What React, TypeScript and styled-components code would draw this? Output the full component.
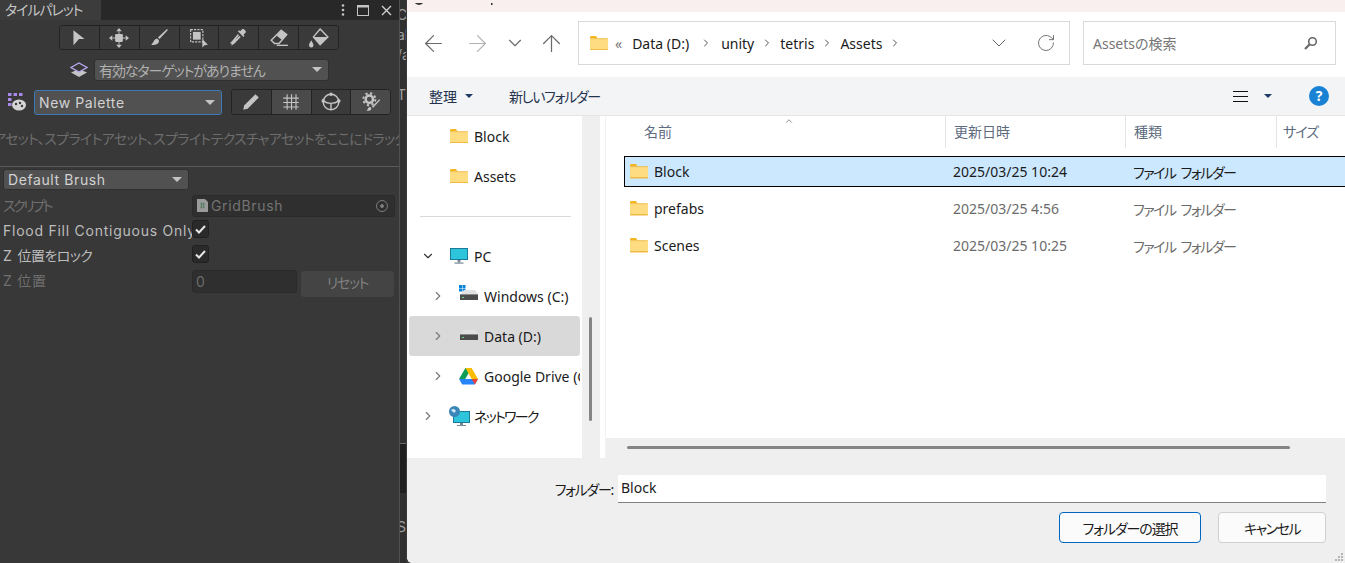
import { ReactNode } from 'react';
import styled, { createGlobalStyle } from 'styled-components';
import { ArrowLeft, ArrowRight, ArrowUp, ChevronDown, ChevronRight, ChevronUp, RotateCw } from 'lucide-react';

const GlobalStyle = createGlobalStyle`
  html, body { margin: 0; padding: 0; height: 100%; overflow: hidden; background: #383838; }
  #root { height: 100%; }
  * { box-sizing: border-box; font-feature-settings: 'palt'; }
  svg { flex: none; }
`;

const JP = '"Noto Sans CJK JP"';
const UNITY_FONT = `Inter, ${JP}, sans-serif`;
const WIN_FONT = `"Noto Sans", ${JP}, sans-serif`;

const Page = styled.div`
  display: flex;
  width: 1345px;
  height: 563px;
  overflow: hidden;
`;

const Spaced = styled.span<{ $ml?: number; $mr?: number }>`
  display: inline-flex;
  align-items: center;
  margin-left: ${p => p.$ml ?? 0}px;
  margin-right: ${p => p.$mr ?? 0}px;
`;

/* the source font sets kana tighter than Noto does */
const Kana = styled.span<{ $ls?: number; $ml?: number }>`
  letter-spacing: ${p => p.$ls ?? -1.3}px;
  word-spacing: 3px;
  margin-left: ${p => p.$ml ?? 0}px;
`;

/* ---------- Unity tile palette ---------- */

const UnityPanel = styled.div`
  width: 400px;
  flex: none;
  height: 100%;
  background: #383838;
  color: #c4c4c4;
  font: 14px ${UNITY_FONT};
  letter-spacing: 0.45px;
  border-right: 1px solid #505050;
`;

const TabBar = styled.div`
  display: flex;
  align-items: center;
  height: 20px;
  background: #282828;
  color: #c4c4c4;
`;

const Tab = styled.div`
  width: 101px;
  height: 20px;
  background: #3c3c3c;
  padding-left: 5px;
  font-size: 14px;
  line-height: 19px;
  white-space: nowrap;
`;

const WindowButtons = styled.div`
  margin-left: auto;
  display: flex;
  align-items: center;
  gap: 12px;
  padding-right: 7px;
  height: 16px;
`;

const ToolRow = styled.div<{ $mt: number; $pl: number }>`
  display: flex;
  align-items: center;
  margin-top: ${p => p.$mt}px;
  padding-left: ${p => p.$pl}px;
`;

const ButtonGroup = styled.div<{ $w: number; $ml?: number }>`
  display: flex;
  width: ${p => p.$w}px;
  margin-left: ${p => p.$ml ?? 0}px;
  border: 1px solid #232323;
  border-radius: 3px;
  overflow: hidden;
`;

const ToolButton = styled.div<{ $on?: boolean; $h: number }>`
  flex: 1;
  height: ${p => p.$h}px;
  display: flex;
  align-items: center;
  justify-content: center;
  background: ${p => (p.$on ? '#4a4a4a' : '#3a3a3a')};
  & + & { border-left: 1px solid #232323; }
`;

const Dropdown = styled.div<{ $w: number; $h: number; $focus?: boolean; $dim?: boolean }>`
  width: ${p => p.$w}px;
  height: ${p => p.$h}px;
  display: flex;
  align-items: center;
  justify-content: space-between;
  padding: 0 6px ${p => (p.$focus ? 0 : 1)}px 4px;
  background: #515151;
  border: 1px solid ${p => (p.$focus ? '#3a79bb' : '#303030')};
  border-radius: 3px;
  color: ${p => (p.$dim ? '#b0b0b0' : '#d2d2d2')};
  font-size: 14px;
  letter-spacing: 0.6px;
  white-space: nowrap;
`;

const Caret = styled.span`
  width: 0;
  height: 0;
  border-left: 5px solid transparent;
  border-right: 5px solid transparent;
  border-top: 5px solid #c4c4c4;
`;

const Hint = styled.div`
  display: flex;
  justify-content: center;
  margin-top: 13px;
  height: 21px;
  line-height: 21px;
  overflow: hidden;
  white-space: nowrap;
  color: #6d6d6d;
  font-size: 14px;
  letter-spacing: -0.65px;
`;

const Divider = styled.div`
  height: 1px;
  background: #5a5a5a;
  margin-top: 17px;
`;

const Inspector = styled.div`
  display: grid;
  grid-template-columns: 189px 1fr;
  row-gap: 3px;
  padding: 5px 4px 0 3px;
`;

const FieldLabel = styled.div<{ $dim?: boolean }>`
  overflow: hidden;
  white-space: nowrap;
  font-size: 14px;
  line-height: 21px;
  letter-spacing: 0.75px;
  color: ${p => (p.$dim ? '#6f6f6f' : '#bdbdbd')};
  height: 22px;
`;

const FieldWrap = styled.div`
  display: flex;
  gap: 4px;
  align-items: flex-start;
  height: 22px;
`;

const ScriptField = styled.div`
  flex: 1;
  height: 22px;
  display: flex;
  align-items: center;
  gap: 3px;
  padding: 0 0 1px 4px;
  background: #2f2f2f;
  border: 1px solid #2a2a2a;
  border-radius: 3px;
  color: #737373;
  font-size: 14px;
  letter-spacing: 0.65px;
`;

const Check = styled.div`
  width: 17px;
  height: 18px;
  display: flex;
  align-items: center;
  justify-content: center;
  background: #2a2a2a;
  border: 1px solid #212121;
  border-radius: 3px;
`;

const NumberField = styled.div`
  width: 105px;
  height: 23px;
  padding-left: 3px;
  background: #2f2f2f;
  border: 1px solid #2a2a2a;
  border-radius: 3px;
  color: #6b6b6b;
  line-height: 21px;
`;

const ResetButton = styled.div`
  width: 93px;
  height: 26px;
  margin-top: 1px;
  border-radius: 3px;
  background: #444;
  color: #808080;
  text-align: center;
  line-height: 23px;
  font-size: 14px;
`;

/* ---------- window behind the dialog ---------- */

const BackStrip = styled.div`
  width: 6px;
  flex: none;
  display: flex;
  flex-direction: column;
  background: #303030;
  color: #a0a0a0;
  font: 14px/20px ${UNITY_FONT};
  overflow: hidden;
  white-space: nowrap;
  padding-top: 5px;
`;

const BackLine = styled.div<{ $mt?: number }>`
  height: 20px;
  flex: none;
  margin-top: ${p => p.$mt ?? 0}px;
  text-indent: -3px;
`;

const BackBlock = styled.div`
  height: 50px;
  flex: none;
  margin-top: 338px;
  background: #202020;
  border-top: 1px solid #6a6a6a;
`;

/* ---------- Windows dialog ---------- */

const Dialog = styled.div`
  flex: 1;
  height: 100%;
  display: flex;
  flex-direction: column;
  background: #fff;
  border-left: 1px solid #3a3a3a;
  border-bottom-left-radius: 6px;
  color: #1a1a1a;
  font: 14px ${WIN_FONT};
  overflow: hidden;
`;

const TitleBar = styled.div`
  height: 12px;
  flex: none;
  background: #f9efef;
`;

const NavBar = styled.div`
  height: 65px;
  flex: none;
  display: flex;
  align-items: center;
  padding: 0 9px 3px 4px;
  background: #fff;
`;

const NavSlot = styled.div<{ $w: number }>`
  width: ${p => p.$w}px;
  flex: none;
  display: flex;
  justify-content: center;
`;

const NavBox = styled.div<{ $w: number; $ml?: number }>`
  width: ${p => p.$w}px;
  margin-left: ${p => p.$ml ?? 7}px;
  flex: none;
  height: 44px;
  display: flex;
  align-items: center;
  border: 1px solid #d9d9d9;
`;

const Crumbs = styled.div`
  flex: 1;
  display: flex;
  align-items: center;
  padding-left: 11px;
  gap: 7px;
`;

const Crumb = styled.span<{ $ml?: number; $mr?: number; $dim?: boolean }>`
  font-size: 14px;
  color: ${p => (p.$dim ? '#777' : '#1a1a1a')};
  margin-left: ${p => p.$ml ?? 0}px;
  margin-right: ${p => p.$mr ?? 0}px;
`;

const SearchText = styled.span`
  flex: 1;
  padding-left: 9px;
  color: #767676;
`;

const CmdBar = styled.div`
  height: 39px;
  flex: none;
  display: flex;
  align-items: center;
  padding: 0 16px 0 22px;
  background: #f3f4f6;
  border-bottom: 1px solid #e4e4e4;
  color: #24334d;
`;

const CmdItem = styled.span<{ $ml?: number; $gap?: number; $right?: boolean }>`
  display: flex;
  align-items: center;
  gap: ${p => p.$gap ?? 8}px;
  margin-left: ${p => (p.$right ? 'auto' : `${p.$ml ?? 0}px`)};
`;

const DownCaret = styled.span`
  width: 0;
  height: 0;
  border-left: 4px solid transparent;
  border-right: 4px solid transparent;
  border-top: 4px solid #1f3a66;
`;

const HelpBadge = styled.span`
  width: 20px;
  height: 20px;
  margin-left: 37px;
  border-radius: 50%;
  background: #1a82d4;
  color: #fff;
  font-size: 14px;
  font-weight: 700;
  line-height: 20px;
  text-align: center;
`;

const Body = styled.div`
  flex: 1;
  display: flex;
  min-height: 0;
`;

const Sidebar = styled.div`
  width: 175px;
  flex: none;
  padding: 0 2px;
  background: #fff;
`;

const SideRow = styled.div<{ $indent: number; $selected?: boolean }>`
  height: 40px;
  display: flex;
  align-items: center;
  padding-left: ${p => p.$indent}px;
  gap: 6px;
  border-radius: 3px;
  white-space: nowrap;
  overflow: hidden;
  background: ${p => (p.$selected ? '#d9d9d9' : 'transparent')};
`;

const TreeArrow = styled.span<{ $mr: number }>`
  width: 14px;
  flex: none;
  display: flex;
  justify-content: center;
  margin-right: ${p => p.$mr}px;
  color: #7a7a7a;
`;

const SideRule = styled.div`
  height: 1px;
  background: #d9d9d9;
  margin: 20px 9px 19px 11px;
`;

const VScrollTrack = styled.div`
  width: 18px;
  flex: none;
  background: #efefef;
  padding: 201px 0 0 7px;
`;

const VScrollThumb = styled.div`
  width: 3px;
  height: 104px;
  background: #858585;
  border-radius: 2px;
`;

const ListPane = styled.div`
  flex: 1;
  min-width: 0;
  display: flex;
  flex-direction: column;
  margin-left: 5px;
  border-left: 1px solid #f2f2f2;
`;

const ListHeader = styled.div`
  position: relative;
  height: 32px;
  flex: none;
  display: grid;
  grid-template-columns: 339px 180px 151px 1fr;
  color: #5d6b80;
`;

const SortMark = styled.span`
  position: absolute;
  left: 178px;
  top: -5px;
  color: #777;
`;

const HeaderCell = styled.div<{ $pl?: number; $first?: boolean }>`
  display: flex;
  align-items: center;
  padding: 0 0 2px ${p => p.$pl ?? 8}px;
  height: 32px;
  border-left: ${p => (p.$first ? 'none' : '1px solid #e5e5e5')};
  white-space: nowrap;
`;

const Rows = styled.div`
  flex: 1;
  display: flex;
  flex-direction: column;
  gap: 6px;
  padding: 8px 0 0 18px;
`;

const FileRow = styled.div<{ $selected?: boolean }>`
  height: 31px;
  display: grid;
  grid-template-columns: 320px 180px 1fr;
  align-items: center;
  margin-right: ${p => (p.$selected ? -2 : 0)}px;
  border: 1px solid ${p => (p.$selected ? '#000' : 'transparent')};
  background: ${p => (p.$selected ? '#cce8ff' : 'transparent')};
  color: ${p => (p.$selected ? '#1a1a1a' : '#6b6b6b')};
`;

const NameCell = styled.div`
  display: flex;
  align-items: center;
  gap: 6px;
  padding-left: 5px;
  color: #1a1a1a;
`;

const DateCell = styled.div`
  padding-left: 8px;
`;

const HScrollTrack = styled.div`
  height: 20px;
  flex: none;
  background: #efefef;
  padding: 8px 55px 0 21px;
`;

const HScrollThumb = styled.div`
  height: 3px;
  background: #858585;
  border-radius: 2px;
`;

const Footer = styled.div`
  position: relative;
  height: 105px;
  flex: none;
  background: #efefef;
  padding: 17px 19px 0 0;
`;

const FolderField = styled.div`
  display: flex;
  justify-content: flex-end;
  align-items: center;
  gap: 5px;
`;

const FolderInput = styled.div`
  width: 708px;
  height: 28px;
  padding-left: 3px;
  background: #fff;
  border-bottom: 1px solid #808080;
  line-height: 25px;
`;

const FooterButtons = styled.div`
  display: flex;
  justify-content: flex-end;
  gap: 17px;
  margin-top: 9px;
`;

const DialogButton = styled.div<{ $w: number; $primary?: boolean }>`
  width: ${p => p.$w}px;
  height: 31px;
  display: flex;
  align-items: center;
  justify-content: center;
  background: #fbfbfb;
  border: 1px solid ${p => (p.$primary ? '#0067c0' : '#d0d0d0')};
  border-radius: 4px;
  font-size: 14px;
`;

const Grip = styled.svg`
  position: absolute;
  right: 1px;
  bottom: 1px;
`;

/* ---------- drawings ---------- */

function Folder({ w = 18 }: { w?: number }) {
  return (
    <svg width={w} height={w * 0.8} viewBox="0 0 20 16">
      <path d="M0 1.5C0 .7.7 0 1.5 0h5l2 2.5H0z" fill="#f5b51f" />
      <rect x="0" y="2.5" width="20" height="13.5" rx="1" fill="#f0b93f" />
      <rect x="0" y="3.5" width="20" height="11" fill="#fddc82" />
    </svg>
  );
}

function Drive({ win }: { win?: boolean }) {
  return (
    <svg width="19" height="22" viewBox="0 0 19 22">
      {win && (
        <g fill="#0a84d8">
          <rect x="0" y="0" width="3" height="3" />
          <rect x="3.500" y="0" width="3" height="3" />
          <rect x="0" y="3.500" width="3" height="3" />
          <rect x="3.500" y="3.500" width="3" height="3" />
        </g>
      )}
      <path d="M2 9l3-4h11l3 4z" fill="#e2e2e2" />
      <rect x="1" y="9" width="18" height="6" fill="#4c4c4c" />
      <rect x="1" y="9" width="18" height="1" fill="#8a8a8a" />
      <rect x="3" y="12" width="2" height="1" fill="#5fe08a" />
    </svg>
  );
}

function Monitor() {
  return (
    <svg width="18" height="16" viewBox="0 0 18 16">
      <rect x=".5" y=".5" width="17" height="11" fill="#2ec5dc" stroke="#1b7a96" />
      <rect x="7.500" y="12" width="3" height="2.500" fill="#7a8a96" />
      <rect x="4.500" y="14.500" width="9" height="1.200" fill="#7a8a96" />
    </svg>
  );
}

function Network() {
  return (
    <svg width="21" height="20" viewBox="0 0 21 20">
      <rect x="4.500" y="5.500" width="16" height="11" fill="#2ec5dc" stroke="#1b7a96" />
      <rect x="11" y="17" width="3" height="2" fill="#7a8a96" />
      <rect x="8" y="19" width="9" height="1" fill="#7a8a96" />
      <circle cx="5.500" cy="5.500" r="5.500" fill="#3a86b8" />
      <path d="M2 4c2-2 4-1 5 1l-2 2z" fill="#cfe6f5" />
    </svg>
  );
}

function GoogleDrive() {
  return (
    <svg width="19" height="17" viewBox="0 0 20 18">
      <path d="M6.700 0h6.600L6.600 11.600H0z" fill="#0f9d58" />
      <path d="M13.300 0L20 11.600h-6.600L6.700 0z" fill="#fbbc04" />
      <path d="M0 11.600h20L16.700 17.500H3.300z" fill="#2684fc" />
      <path d="M20 11.600h-6.600l3.300 5.900z" fill="#ea4335" />
    </svg>
  );
}

function Tool({ children }: { children: ReactNode }) {
  return (
    <svg width="20" height="20" viewBox="0 0 18 18" fill="#c4c4c4">
      {children}
    </svg>
  );
}

function Tick() {
  return (
    <svg width="11" height="9" viewBox="0 0 11 9" fill="none" stroke="#e6e6e6" strokeWidth="2">
      <path d="M1 4.500l3 3 6-6.500" />
    </svg>
  );
}

const tools: ReactNode[] = [
  <path key="select" d="M4 2l10 8H9L4 15.500z" />,
  <g key="move">
    <rect x="5.500" y="5.500" width="7" height="7" rx="1" />
    <path d="M9 0l2.500 3h-5zM9 18l2.500-3h-5zM0 9l3-2.500v5zM18 9l-3-2.500v5z" />
    <path d="M8.600 3h.8v3h-.8zM8.600 12h.8v3h-.8zM3 8.600h3v.8H3zM12 8.600h3v.8h-3z" />
  </g>,
  <g key="brush">
    <path d="M16.200 1l.8.8-7.500 8.200-1.500-1.500z" />
    <path d="M6 10c2-1 3 1 3 2 0 2-3 4-7 3 2-1 2-4 4-5z" />
  </g>,
  <g key="box">
    <rect x="1.500" y="1.500" width="11" height="11" fill="none" stroke="#c4c4c4" strokeDasharray="2 1" />
    <rect x="3.500" y="3.500" width="7" height="7" />
    <path d="M12 10l5 5-3 .5-2 2z" />
  </g>,
  <g key="pick">
    <path d="M12 1c1-1 4 2 3 3l-2 2 1 1-1 1-5-5 1-1 1 1z" />
    <path d="M8 5.500l1 1-5 6-2 2-1-1 2-2zM9.500 7l1 1-5.500 6-3 2 1-3z" />
  </g>,
  <g key="erase">
    <path d="M11 2l5 4-7 8H5L2 11z" fill="none" stroke="#c4c4c4" strokeWidth="1.300" />
    <path d="M11 2l5 4-4 5-5-4z" />
    <rect x="7" y="15" width="10" height="1.200" />
  </g>,
  <g key="fill">
    <path d="M10 1l7 7-7 7-6-7z" fill="none" stroke="#c4c4c4" strokeWidth="1.300" />
    <path d="M4 8h13l-7 7z" />
    <path d="M2 11c1 2 2 3 2 4.500a2 2 0 01-4 0c0-1.500 1-2.500 2-4.500z" />
  </g>,
];

const paletteTools: ReactNode[] = [
  <path key="pencil" d="M13 2l3 3L6 15l-4 1 1-4z" />,
  <path key="grid" d="M5 2h1v14H5zM9 2h1v14H9zM13 2h1v14h-1zM2 5h14v1H2zM2 9h14v1H2zM2 13h14v1H2z" />,
  <g key="orbit">
    <circle cx="9" cy="9" r="7" fill="none" stroke="#c4c4c4" strokeWidth="1.300" />
    <path d="M2 8c4 3 10 3 14 0M9 10.500V16" fill="none" stroke="#c4c4c4" strokeWidth="1.300" />
    <circle cx="9" cy="2" r="1.600" />
    <circle cx="2" cy="8" r="1.600" />
    <circle cx="16" cy="8" r="1.600" />
  </g>,
  <g key="gear">
    <circle cx="7.500" cy="6.500" r="3.300" fill="none" stroke="#c4c4c4" strokeWidth="2.200" />
    <circle cx="7.500" cy="6.500" r="5.400" fill="none" stroke="#c4c4c4" strokeWidth="1.800" strokeDasharray="2 2.240" />
    <path d="M16.500 6.500l.8.7-6.300 7-1.200-1z" />
    <path d="M7 14c1-1 3 0 2 2-1 1-3 1-4 1 1-1 1-2 2-3z" />
  </g>,
];

const files = [
  { name: 'Block', date: '2025/03/25 10:24', selected: true },
  { name: 'prefabs', date: '2025/03/25 4:56' },
  { name: 'Scenes', date: '2025/03/25 10:25' },
];

export default function App() {
  return (
    <Page>
      <GlobalStyle />
      <UnityPanel>
        <TabBar>
          <Tab>
            <Kana $ls={-1.1}>タイルパレット</Kana>
          </Tab>
          <WindowButtons>
            <svg width="4" height="12" viewBox="0 0 4 12" fill="#c4c4c4">
              <circle cx="2" cy="1.500" r="1.300" />
              <circle cx="2" cy="6" r="1.300" />
              <circle cx="2" cy="10.500" r="1.300" />
            </svg>
            <svg width="12" height="11" viewBox="0 0 12 11" fill="none" stroke="#c4c4c4">
              <rect x=".5" y=".5" width="11" height="10" />
              <path d="M0 1.500h12" strokeWidth="2" />
            </svg>
            <svg width="11" height="11" viewBox="0 0 11 11" stroke="#d0d0d0" strokeWidth="1.400">
              <path d="M1 1l9 9M10 1l-9 9" />
            </svg>
          </WindowButtons>
        </TabBar>
        <ToolRow $mt={5} $pl={59}>
          <ButtonGroup $w={280}>
            {tools.map((t, i) => (
              <ToolButton key={i} $h={23}>
                <Tool>{t}</Tool>
              </ToolButton>
            ))}
          </ButtonGroup>
        </ToolRow>
        <ToolRow $mt={9} $pl={70}>
          <Spaced $mr={6}>
            <svg width="18" height="16" viewBox="0 0 18 16">
              <path d="M9 7l8 3.500L9 15l-8-4.500z" fill="#c4c4c4" />
              <path d="M9 1l8 4.500L9 10 1 5.500z" fill="#383838" stroke="#b9a8ec" strokeWidth="1.300" />
            </svg>
          </Spaced>
          <Dropdown $w={235} $h={22} $dim>
            <Kana $ls={-1.1}>有効なターゲットがありません</Kana>
            <Caret />
          </Dropdown>
        </ToolRow>
        <ToolRow $mt={8} $pl={8}>
          <Spaced $mr={8}>
            <svg width="18" height="18" viewBox="0 0 18 18">
              <g fill="#a88be8">
                <rect x="0" y="0" width="3.500" height="3" />
                <rect x="5.500" y="0" width="3.500" height="3" />
                <rect x="11" y="0" width="3.500" height="3" />
                <rect x="0" y="5" width="3.500" height="3" />
                <rect x="0" y="10" width="3.500" height="3" />
              </g>
              <ellipse cx="11" cy="12" rx="7" ry="5.500" fill="#d4d4d4" />
              <circle cx="8" cy="11" r="1.200" fill="#383838" />
              <circle cx="12" cy="10" r="1.200" fill="#383838" />
              <circle cx="14" cy="13" r="1.200" fill="#383838" />
            </svg>
          </Spaced>
          <Dropdown $w={188} $h={25} $focus>
            New Palette
            <Caret />
          </Dropdown>
          <ButtonGroup $w={160} $ml={9}>
            {paletteTools.map((t, i) => (
              <ToolButton key={i} $h={24} $on={i % 2 === 1}>
                <Tool>{t}</Tool>
              </ToolButton>
            ))}
          </ButtonGroup>
        </ToolRow>
        <Hint>タイルアセット、スプライトアセット、スプライトテクスチャアセットをここにドラッグします</Hint>
        <Divider />
        <ToolRow $mt={2} $pl={3}>
          <Dropdown $w={186} $h={21}>
            Default Brush
            <Caret />
          </Dropdown>
        </ToolRow>
        <Inspector>
          <FieldLabel $dim>
            <Kana $ls={-2.4}>スクリプト</Kana>
          </FieldLabel>
          <FieldWrap>
            <ScriptField>
              <svg width="11" height="13" viewBox="0 0 11 13">
                <path d="M0 0h8l3 3v10H0z" fill="#9a9a9a" />
                <path d="M3 5h5M3 8h5M4.500 3.500v6M6.500 3.500v6" stroke="#5d7f68" />
              </svg>
              GridBrush
              <Spaced $ml={89}>
                <svg width="14" height="14" viewBox="0 0 14 14" fill="none" stroke="#7d7d7d">
                  <circle cx="7" cy="7" r="5.500" />
                  <circle cx="7" cy="7" r="1.500" fill="#7d7d7d" />
                </svg>
              </Spaced>
            </ScriptField>
          </FieldWrap>
          <FieldLabel>Flood Fill Contiguous Only</FieldLabel>
          <FieldWrap>
            <Check>
              <Tick />
            </Check>
          </FieldWrap>
          <FieldLabel>
            <Kana $ls={-0.6}>Z 位置をロック</Kana>
          </FieldLabel>
          <FieldWrap>
            <Check>
              <Tick />
            </Check>
          </FieldWrap>
          <FieldLabel $dim>Z 位置</FieldLabel>
          <FieldWrap>
            <NumberField>0</NumberField>
            <ResetButton>
              <Kana $ls={-1.3}>リセット</Kana>
            </ResetButton>
          </FieldWrap>
        </Inspector>
      </UnityPanel>
      <BackStrip>
        <BackLine>Ca</BackLine>
        <BackLine>al</BackLine>
        <BackLine>/a</BackLine>
        <BackLine $mt={20}>Tr</BackLine>
        <BackBlock />
        <BackLine $mt={24}>S</BackLine>
      </BackStrip>
      <Dialog>
        <TitleBar>
          <svg width="90" height="12" viewBox="0 0 90 12" fill="#333">
            <circle cx="12" cy="-3" r="5" />
            <rect x="84" y="0" width="1.500" height="2" />
          </svg>
        </TitleBar>
        <NavBar>
          <NavSlot $w={44}>
            <ArrowLeft size={27} color="#6b6b6b" strokeWidth={1.1} />
          </NavSlot>
          <NavSlot $w={44}>
            <ArrowRight size={27} color="#b3b3b3" strokeWidth={1.1} />
          </NavSlot>
          <NavSlot $w={32}>
            <ChevronDown size={22} color="#6b6b6b" strokeWidth={1.2} />
          </NavSlot>
          <NavSlot $w={40}>
            <ArrowUp size={27} color="#6b6b6b" strokeWidth={1.1} />
          </NavSlot>
          <NavBox $w={492}>
            <Crumbs>
              <Folder />
              <Crumb $dim>«</Crumb>
              <Crumb $ml={3} $mr={4}>Data (D:)</Crumb>
              <ChevronRight size={12} color="#555" />
              <Crumb $ml={2}>unity</Crumb>
              <ChevronRight size={12} color="#555" />
              <Crumb>tetris</Crumb>
              <ChevronRight size={12} color="#555" />
              <Crumb>Assets</Crumb>
              <ChevronRight size={12} color="#555" />
            </Crumbs>
            <Spaced $mr={25}>
              <ChevronDown size={24} color="#666" strokeWidth={1} />
            </Spaced>
            <Spaced $mr={13}>
              <RotateCw size={20} color="#777" strokeWidth={1.2} />
            </Spaced>
          </NavBox>
          <NavBox $w={253} $ml={13}>
            <SearchText>Assetsの検索</SearchText>
            <Spaced $mr={17}>
              <svg width="14" height="14" viewBox="0 0 14 14" fill="none" stroke="#666" strokeWidth="1.600">
                <circle cx="8.500" cy="5.500" r="3.800" />
                <path d="M5.500 8.500L1 13" strokeWidth="2.200" />
              </svg>
            </Spaced>
          </NavBox>
        </NavBar>
        <CmdBar>
          <CmdItem>
            整理 <DownCaret />
          </CmdItem>
          <CmdItem $ml={36}>
            <Kana>新しいフォルダー</Kana>
          </CmdItem>
          <CmdItem $right $gap={16}>
            <svg width="15" height="13" viewBox="0 0 15 13" stroke="#111">
              <path d="M0 1.500h15M0 6.500h15M0 11.500h15" />
            </svg>
            <DownCaret />
          </CmdItem>
          <HelpBadge>?</HelpBadge>
        </CmdBar>
        <Body>
          <Sidebar>
            <SideRow $indent={41}>
              <Folder />
              Block
            </SideRow>
            <SideRow $indent={41}>
              <Folder />
              Assets
            </SideRow>
            <SideRule />
            <SideRow $indent={12}>
              <TreeArrow $mr={9}>
                <ChevronDown size={14} color="#333" />
              </TreeArrow>
              <Monitor />
              PC
            </SideRow>
            <SideRow $indent={22}>
              <TreeArrow $mr={8}>
                <ChevronRight size={14} />
              </TreeArrow>
              <Drive win />
              Windows (C:)
            </SideRow>
            <SideRow $indent={22} $selected>
              <TreeArrow $mr={8}>
                <ChevronRight size={14} />
              </TreeArrow>
              <Drive />
              Data (D:)
            </SideRow>
            <SideRow $indent={22}>
              <TreeArrow $mr={8}>
                <ChevronRight size={14} />
              </TreeArrow>
              <GoogleDrive />
              Google Drive (G:)
            </SideRow>
            <SideRow $indent={12}>
              <TreeArrow $mr={8}>
                <ChevronRight size={14} />
              </TreeArrow>
              <Network />
              <Kana $ml={-2} $ls={-1.7}>ネットワーク</Kana>
            </SideRow>
          </Sidebar>
          <VScrollTrack>
            <VScrollThumb />
          </VScrollTrack>
          <ListPane>
            <ListHeader>
              <SortMark>
                <ChevronUp size={10} />
              </SortMark>
              <HeaderCell $first $pl={38}>名前</HeaderCell>
              <HeaderCell>更新日時</HeaderCell>
              <HeaderCell>種類</HeaderCell>
              <HeaderCell $pl={6}>
                <Kana $ls={-1}>サイズ</Kana>
              </HeaderCell>
            </ListHeader>
            <Rows>
              {files.map(f => (
                <FileRow key={f.name} $selected={f.selected}>
                  <NameCell>
                    <Folder />
                    {f.name}
                  </NameCell>
                  <DateCell>{f.date}</DateCell>
                  <DateCell>
                    <Kana $ls={-1.5}>ファイル フォルダー</Kana>
                  </DateCell>
                </FileRow>
              ))}
            </Rows>
            <HScrollTrack>
              <HScrollThumb />
            </HScrollTrack>
          </ListPane>
        </Body>
        <Footer>
          <FolderField>
            <Kana>フォルダー:</Kana>
            <FolderInput>Block</FolderInput>
          </FolderField>
          <FooterButtons>
            <DialogButton $w={142} $primary>
              <Kana $ls={-1.1}>フォルダーの選択</Kana>
            </DialogButton>
            <DialogButton $w={108}>
              <Kana $ls={-1.5}>キャンセル</Kana>
            </DialogButton>
          </FooterButtons>
          <Grip width="10" height="10" viewBox="0 0 10 10" fill="#b5b5b5">
            <rect x="7" y="1" width="2" height="2" />
            <rect x="4" y="4" width="2" height="2" />
            <rect x="7" y="4" width="2" height="2" />
            <rect x="1" y="7" width="2" height="2" />
            <rect x="4" y="7" width="2" height="2" />
            <rect x="7" y="7" width="2" height="2" />
          </Grip>
        </Footer>
      </Dialog>
    </Page>
  );
}
